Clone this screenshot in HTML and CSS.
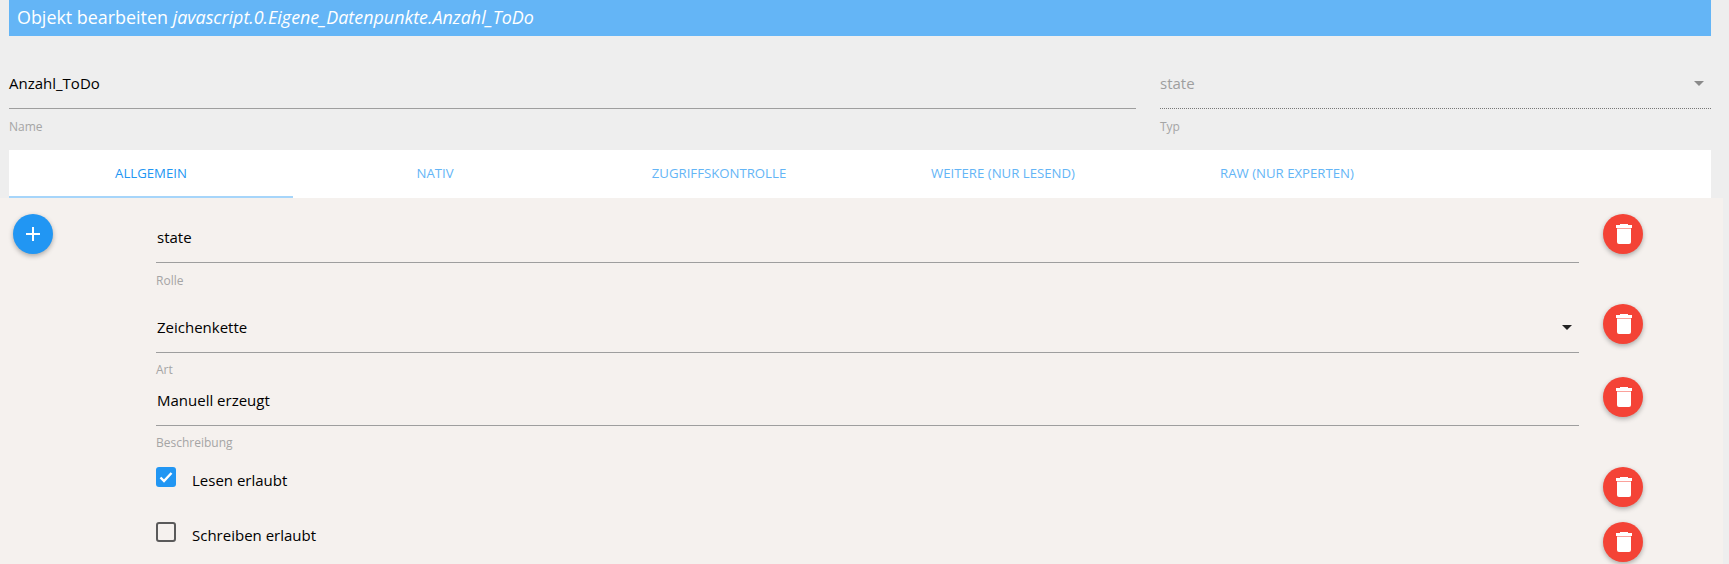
FILE: index.html

```html
<!DOCTYPE html>
<html lang="de">
<head>
    <meta charset="UTF-8">
    <title>Objekt bearbeiten</title>
    <link rel="stylesheet" href="styles.css">
</head>
<body>
  <div class="top">
    <h1 class="title">Objekt bearbeiten <i>javascript.0.Eigene_Datenpunkte.Anzahl_ToDo</i></h1>
    <div class="head-form">
      <div class="name-field">
        <div class="value">Anzahl_ToDo</div>
        <label class="hint">Name</label>
      </div>
      <div class="type-field">
        <div class="value disabled">state
          <svg class="caret" width="10" height="5" viewBox="0 0 10 5"><path d="M0 0h10L5 5z" fill="#8a8a8a"/></svg>
        </div>
        <label class="hint">Typ</label>
      </div>
    </div>
    <div class="tabs">
      <a class="tab active">Allgemein</a>
      <a class="tab">Nativ</a>
      <a class="tab">Zugriffskontrolle</a>
      <a class="tab">Weitere (nur lesend)</a>
      <a class="tab">Raw (nur Experten)</a>
    </div>
  </div>

  <div class="panel">
    <button class="fab add">
      <svg width="24" height="24" viewBox="0 0 24 24"><path d="M19 13h-6v6h-2v-6H5v-2h6V5h2v6h6v2z" fill="#fff"/></svg>
    </button>
    <div class="rows">
      <div class="row row-a">
        <div class="field">
          <div class="value">state</div>
          <label class="hint">Rolle</label>
        </div>
        <button class="fab del"><svg class="trash" width="16" height="20" viewBox="0 0 16 20"><path d="M4 0h8v1h4v3H0V1h4zM1 4.600h14V18a2 2 0 0 1-2 2H3a2 2 0 0 1-2-2z" fill="#fff"/></svg></button>
      </div>
      <div class="row row-b">
        <div class="field">
          <div class="value">Zeichenkette
            <svg class="caret" width="10" height="5" viewBox="0 0 10 5"><path d="M0 0h10L5 5z" fill="#222"/></svg>
          </div>
          <label class="hint tight">Art</label>
        </div>
        <button class="fab del"><svg class="trash" width="16" height="20" viewBox="0 0 16 20"><path d="M4 0h8v1h4v3H0V1h4zM1 4.600h14V18a2 2 0 0 1-2 2H3a2 2 0 0 1-2-2z" fill="#fff"/></svg></button>
      </div>
      <div class="row row-a">
        <div class="field">
          <div class="value">Manuell erzeugt</div>
          <label class="hint tight">Beschreibung</label>
        </div>
        <button class="fab del"><svg class="trash" width="16" height="20" viewBox="0 0 16 20"><path d="M4 0h8v1h4v3H0V1h4zM1 4.600h14V18a2 2 0 0 1-2 2H3a2 2 0 0 1-2-2z" fill="#fff"/></svg></button>
      </div>
      <div class="row row-c">
        <div class="field check">
          <span class="box on">
            <svg width="20" height="20" viewBox="0 0 20 20"><path d="M4.500 10.500l3.500 3.500 7.500-8" fill="none" stroke="#fff" stroke-width="2.400"/></svg>
          </span>
          <span class="check-text">Lesen erlaubt</span>
        </div>
        <button class="fab del"><svg class="trash" width="16" height="20" viewBox="0 0 16 20"><path d="M4 0h8v1h4v3H0V1h4zM1 4.600h14V18a2 2 0 0 1-2 2H3a2 2 0 0 1-2-2z" fill="#fff"/></svg></button>
      </div>
      <div class="row">
        <div class="field check">
          <span class="box"></span>
          <span class="check-text">Schreiben erlaubt</span>
        </div>
        <button class="fab del"><svg class="trash" width="16" height="20" viewBox="0 0 16 20"><path d="M4 0h8v1h4v3H0V1h4zM1 4.600h14V18a2 2 0 0 1-2 2H3a2 2 0 0 1-2-2z" fill="#fff"/></svg></button>
      </div>
    </div>
  </div>
</body>
</html>
```

FILE: styles.css

```css
html, body {
  height: 100%;
  margin: 0;
  overflow: hidden;
}
body {
  background: #eeeeee;
  color: #000;
  font-family: "Open Sans", "Noto Sans", sans-serif;
  font-size: 15px;
}

.top {
  margin: 0 18px 0 9px;
}
.title {
  background: #64b5f6;
  color: #fff;
  font-size: 17.900px;
  font-weight: 400;
  line-height: 35px;
  height: 36px;
  margin: 0;
  padding-left: 8px;
}
.head-form {
  display: flex;
  gap: 24px;
  margin-top: 24px;
  height: 90px;
}
.name-field {
  flex: 0 0 1127px;
}
.type-field {
  flex: 1;
}

.value {
  position: relative;
  display: flex;
  align-items: center;
  box-sizing: border-box;
  height: 49px;
  padding-bottom: 3px;
  border-bottom: 1px solid #9e9e9e;
}
.value.disabled {
  color: #9e9e9e;
  border-bottom: 1px dotted #777;
}
.caret {
  position: absolute;
  right: 7px;
  top: 21px;
}
.hint {
  display: block;
  margin-top: 10px;
  font-size: 12px;
  line-height: 16px;
  color: #a5a5a5;
}
.hint.tight {
  margin-top: 9px;
}

.tabs {
  display: flex;
  background: #fff;
  height: 48px;
}
.tab {
  flex: 0 0 284px;
  box-sizing: border-box;
  text-align: center;
  line-height: 47px;
  font-size: 13.200px;
  text-transform: uppercase;
  color: #64b5f6;
}
.tab.active {
  color: #2196f3;
  border-bottom: 2px solid #a6d5fa;
}

.panel {
  display: flex;
  align-items: flex-start;
  margin-right: 6px;
  height: 366px;
  background: #f5f1ee;
  padding: 16px 0 0 13px;
}
.rows {
  margin-left: 103px;
  width: 1487px;
}
.row {
  display: flex;
  align-items: flex-start;
  gap: 24px;
}
.row-a {
  height: 90px;
}
.row-b {
  height: 73px;
}
.row-c {
  height: 55px;
}
.field {
  flex: 0 0 1423px;
}
.field .value {
  padding-left: 1px;
}

.fab {
  display: flex;
  align-items: center;
  justify-content: center;
  flex: none;
  width: 40px;
  height: 40px;
  padding: 0;
  border: 0;
  border-radius: 50%;
  box-shadow: 0 2px 5px rgba(0, 0, 0, .3);
}
.add {
  background: #2196f3;
}
.del {
  background: #f44336;
}
.trash {
  margin-left: 2px;
}

.check {
  display: flex;
  align-items: center;
  height: 28px;
}
.box {
  box-sizing: border-box;
  width: 20px;
  height: 20px;
  margin-top: -8px;
  border: 2px solid #5a5a5a;
  border-radius: 3px;
}
.box.on {
  border: 0;
  background: #2196f3;
}
.box svg {
  display: block;
}
.check-text {
  margin-left: 16px;
  margin-top: -3px;
}
```
